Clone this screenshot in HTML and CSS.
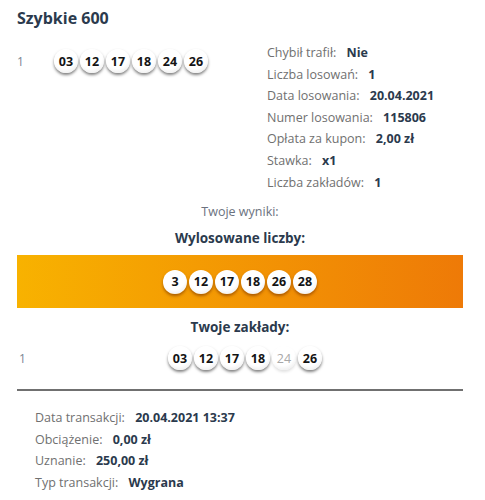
FILE: index.html
```html
<!DOCTYPE html>
<html lang="pl">
  <head>
    <meta charset="UTF-8" />
    <meta name="viewport" content="width=device-width, initial-scale=1.0" />
    <title>Szybkie 600</title>
    <link rel="stylesheet" href="styles.css">
  </head>
  <body>
    <div class="coupon">
      <h1 class="coupon-title">Szybkie 600</h1>

      <div class="ticket">
        <div class="ticket-bets">
          <span class="bet-index">1</span>
          <div class="balls">
            <span class="ball">03</span>
            <span class="ball">12</span>
            <span class="ball">17</span>
            <span class="ball">18</span>
            <span class="ball">24</span>
            <span class="ball">26</span>
          </div>
        </div>

        <ul class="details">
          <li><span class="label">Chybił trafił:</span> <strong>Nie</strong></li>
          <li><span class="label">Liczba losowań:</span> <strong>1</strong></li>
          <li><span class="label">Data losowania:</span> <strong>20.04.2021</strong></li>
          <li><span class="label">Numer losowania:</span> <strong>115806</strong></li>
          <li><span class="label">Opłata za kupon:</span> <strong>2,00 zł</strong></li>
          <li><span class="label">Stawka:</span> <strong>x1</strong></li>
          <li><span class="label">Liczba zakładów:</span> <strong>1</strong></li>
        </ul>
      </div>

      <p class="results-title">Twoje wyniki:</p>
      <h3 class="section-title">Wylosowane liczby:</h3>

      <!-- wylosowane liczby na pomarańczowym pasku -->
      <div class="draw-band">
        <div class="balls">
          <span class="ball">3</span>
          <span class="ball">12</span>
          <span class="ball">17</span>
          <span class="ball">18</span>
          <span class="ball">26</span>
          <span class="ball">28</span>
        </div>
      </div>

      <h3 class="section-title bets-title">Twoje zakłady:</h3>
      <div class="bet-row">
        <span class="bet-index">1</span>
        <div class="balls">
          <span class="ball hit">03</span>
          <span class="ball hit">12</span>
          <span class="ball hit">17</span>
          <span class="ball hit">18</span>
          <span class="ball miss">24</span>
          <span class="ball hit">26</span>
        </div>
      </div>

      <hr class="divider" />

      <ul class="details transaction">
        <li><span class="label">Data transakcji:</span> <strong>20.04.2021 13:37</strong></li>
        <li><span class="label">Obciążenie:</span> <strong>0,00 zł</strong></li>
        <li><span class="label">Uznanie:</span> <strong>250,00 zł</strong></li>
        <li><span class="label">Typ transakcji:</span> <strong>Wygrana</strong></li>
      </ul>
    </div>
  </body>
</html>
```

FILE: styles.css
```css
* {
  box-sizing: border-box;
  margin: 0;
  padding: 0;
}

body {
  background-color: #fff;
  font-family: "Open Sans", "Noto Sans", sans-serif;
  color: #2b3a4d;
}

.coupon {
  padding: 8px 22px 0 17px;
}

.coupon-title {
  font-size: 16px;
  line-height: 20px;
  font-weight: 700;
  color: #2b3a4d;
}

.ticket {
  display: flex;
  margin-top: 14px;
}

.ticket-bets {
  display: flex;
  align-items: center;
  width: 250px;
  height: 24px;
  margin-top: 7px;
}

.ticket-bets .bet-index {
  width: 37px;
}

.bet-index {
  font-size: 12px;
  color: #7b8594;
}

.details {
  list-style: none;
  font-size: 12.5px;
  line-height: 21.6px;
}

.details .label {
  color: #707070;
  margin-right: 7px;
}

.details strong {
  color: #2b3a4d;
  font-weight: 700;
}

.balls {
  display: flex;
  gap: 2px;
}

.ball {
  width: 24px;
  height: 24px;
  border-radius: 50%;
  background: radial-gradient(circle at 45% 35%, #fff 55%, #e2e2e2 100%);
  box-shadow: 0 2px 3px rgba(0, 0, 0, 0.5);
  display: flex;
  align-items: center;
  justify-content: center;
  font-size: 12.5px;
  font-weight: 700;
  color: #141414;
}

.ball.miss {
  color: #a8a8a8;
  font-weight: 400;
  box-shadow: 0 2px 3px rgba(0, 0, 0, 0.12);
}

.results-title {
  text-align: center;
  font-size: 12.5px;
  line-height: 20px;
  color: #6b7280;
  margin-top: 9px;
}

.section-title {
  text-align: center;
  font-size: 13.5px;
  line-height: 20px;
  font-weight: 700;
  color: #2b3a4d;
  margin-top: 6px;
}

.draw-band {
  margin-top: 7px;
  height: 53px;
  background: linear-gradient(to right, #f8b200, #ee7a07);
  display: flex;
  align-items: center;
  justify-content: center;
}

.draw-band .ball {
  box-shadow: 0 2px 3px rgba(120, 50, 0, 0.6);
}

.bets-title {
  margin-top: 9px;
}

.bet-row {
  display: flex;
  align-items: center;
  margin-top: 9px;
  height: 24px;
}

.bet-row .bet-index {
  width: 10px;
  padding-left: 2px;
}

.bet-row .balls {
  flex: 1;
  justify-content: center;
}

.divider {
  border: none;
  height: 2px;
  background-color: #707070;
  margin-top: 19px;
}

.transaction {
  margin-top: 16px;
  padding-left: 18px;
}
```
